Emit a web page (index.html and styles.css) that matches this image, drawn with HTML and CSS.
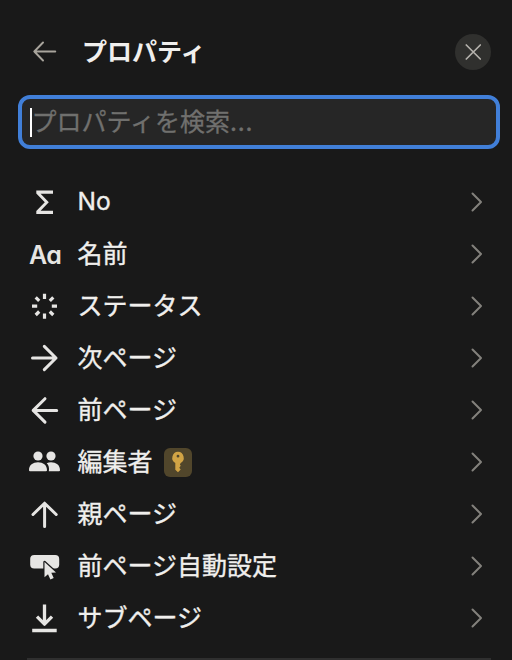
FILE: index.html
```
<!DOCTYPE html>
<html lang="ja">
<head>
<meta charset="utf-8">
<title>プロパティ</title>
<link rel="stylesheet" href="styles.css">
</head>
<body>
<main class="panel">
  <header class="header">
    <svg class="back" viewBox="0 0 24 22"><path d="M22.3 10.5H1.3M10 1.5L1.3 10.5L10 19.5"/></svg>
    <h1 class="title">プロパティ</h1>
    <button class="close" aria-label="閉じる"><svg viewBox="0 0 16 16"><path d="M1.3 1L15.3 15M15.3 1L1.3 15"/></svg></button>
  </header>
  <div class="search"><span class="caret"></span><span class="placeholder">プロパティを検索<span class="dots">...</span></span></div>
  <ul class="list">
    <li class="row"><svg class="icon" viewBox="0 0 32 32"><path class="fill" d="M8.3 4.6H25V7.7H12.6L20.8 16.2L12.6 24.7H25V27.9H8.3V24.9L16.8 16.2L8.3 7.5Z"/></svg><span class="label latin">No</span><svg class="chevron" viewBox="0 0 12 20"><path d="M1.5 1.5L10 10L1.5 18.5"/></svg></li>
    <li class="row"><span class="icon letters">Aa</span><span class="label">名前</span><svg class="chevron" viewBox="0 0 12 20"><path d="M1.5 1.5L10 10L1.5 18.5"/></svg></li>
    <li class="row"><svg class="icon" viewBox="0 0 32 32"><path class="burst" d="M16.5 3.7V8.9M16.5 23.5V28.7M4 16.2H9.2M23.8 16.2H29M7.7 7.4L11.2 10.9M21.8 21.5L25.3 25M25.3 7.4L21.8 10.9M11.2 21.5L7.7 25"/></svg><span class="label">ステータス</span><svg class="chevron" viewBox="0 0 12 20"><path d="M1.5 1.5L10 10L1.5 18.5"/></svg></li>
    <li class="row"><svg class="icon" viewBox="0 0 32 32"><path class="line" d="M4.5 16H28M16.3 4.4L28 16L16.3 27.6"/></svg><span class="label">次ページ</span><svg class="chevron" viewBox="0 0 12 20"><path d="M1.5 1.5L10 10L1.5 18.5"/></svg></li>
    <li class="row"><svg class="icon" viewBox="0 0 32 32"><path class="line" d="M28.7 16.4H5.2M17 4.7L5.2 16.4L17 28.1"/></svg><span class="label">前ページ</span><svg class="chevron" viewBox="0 0 12 20"><path d="M1.5 1.5L10 10L1.5 18.5"/></svg></li>
    <li class="row"><svg class="icon" viewBox="0 0 32 32"><circle class="fill" cx="10" cy="10" r="4.6"/><circle class="fill" cx="23" cy="10" r="4.6"/><path class="fill" d="M1 24.2C1 19 5 16.3 10 16.3S19 19 19 24.2Q19 25.3 18 25.3H2Q1 25.3 1 24.2ZM18.7 17.3Q20.6 16.3 23 16.3C28 16.3 32 19 32 24.2Q32 25.3 31 25.3H20.8C21.5 22 20.7 19.2 18.7 17.3Z"/></svg><span class="label">編集者</span><span class="badge"><svg viewBox="0 0 14 22"><path fill-rule="evenodd" d="M7 .8A6 6 0 0 0 4.3 12V18.8L7 21.3L9.7 18.6L8.3 16.7L9.7 14.8L8.9 13.5L9.7 12A6 6 0 0 0 7 .8ZM7 3.8A1.4 1.4 0 1 1 7 6.6A1.4 1.4 0 0 1 7 3.8Z"/></svg></span><svg class="chevron" viewBox="0 0 12 20"><path d="M1.5 1.5L10 10L1.5 18.5"/></svg></li>
    <li class="row"><svg class="icon" viewBox="0 0 32 32"><path class="line" d="M16.6 28.5V5.2M5 16.5L16.6 5.2L28.2 16.5"/></svg><span class="label">親ページ</span><svg class="chevron" viewBox="0 0 12 20"><path d="M1.5 1.5L10 10L1.5 18.5"/></svg></li>
    <li class="row"><svg class="icon" viewBox="0 0 32 32"><rect class="fill" x="2.2" y="5" width="29" height="13.4" rx="4"/><path class="cursor" d="M16.5 12V27.2L20 24.3L22.4 29.6L25.7 28L23.3 22.8L28 22.4Z"/></svg><span class="label">前ページ自動設定</span><svg class="chevron" viewBox="0 0 12 20"><path d="M1.5 1.5L10 10L1.5 18.5"/></svg></li>
    <li class="row"><svg class="icon" viewBox="0 0 32 32"><path class="download" d="M16.5 2.6V21.2M9 14.7L16.5 22.2L24 14.7M4.2 28.5H28.7"/></svg><span class="label">サブページ</span><svg class="chevron" viewBox="0 0 12 20"><path d="M1.5 1.5L10 10L1.5 18.5"/></svg></li>
  </ul>
  <hr class="divider">
</main>
</body>
</html>
```
FILE: styles.css
```
* { box-sizing: border-box; }
body {
  margin: 0;
  background: #191919;
  color: #f0efed;
  font-family: "Noto Sans CJK JP", sans-serif;
  font-size: 25px;
  overflow: hidden;
}
.panel { height: 660px; padding: 33px 12px 0 18px; }
.header { display: flex; align-items: center; height: 37px; padding: 0 9px 0 15px; }
.back { width: 24px; height: 22px; fill: none; stroke: #a8a49c; stroke-width: 1.9; stroke-linecap: round; stroke-linejoin: round; }
.title { margin: 0 0 0 25px; padding-bottom: 3px; font-size: 25px; line-height: 34px; font-weight: 700; flex: 1; }
.close { display: grid; place-items: center; width: 36px; height: 36px; padding: 0; border: 0; border-radius: 50%; background: #30302e; }
.close svg { width: 16px; height: 16px; fill: none; stroke: #b5b2ad; stroke-width: 1.7; stroke-linecap: round; }
.search {
  display: flex; align-items: center;
  height: 54px; margin-top: 25px; padding-left: 8px;
  border: 4px solid #417fd8; border-radius: 12px; background: #262626;
}
.caret { width: 2px; height: 29px; background: #fff; }
.placeholder { margin-left: -0.5px; padding-bottom: 3px; color: #70706e; line-height: 35px; -webkit-text-stroke: 0.3px #70706e; }
.dots { letter-spacing: 0.8px; }
.list { list-style: none; margin: 26.5px 0 0; padding: 0; }
.row { display: flex; align-items: center; height: 52.1px; padding: 0 17px 0 10px; }
.icon { flex: none; width: 32px; height: 32px; margin-right: 17.6px; color: #e6e5e3; fill: none; stroke-linecap: round; stroke-linejoin: round; }
.fill { fill: #e6e5e3; }
.line { stroke: #e6e5e3; stroke-width: 3; }
.burst { stroke: #e6e5e3; stroke-width: 3.2; stroke-linecap: butt; }
.download { stroke: #e6e5e3; stroke-width: 3.3; stroke-linecap: butt; }
.cursor { fill: #e6e5e3; stroke: #191919; stroke-width: 2.4; paint-order: stroke; }
.letters { padding-left: 1px; font: 600 25px/34px Inter, sans-serif; font-feature-settings: "cv11"; letter-spacing: -0.5px; white-space: nowrap; }
.label { padding-bottom: 3px; line-height: 35px; -webkit-text-stroke: 0.35px #f0efed; white-space: nowrap; }
.latin { padding-bottom: 0; font-family: Inter, sans-serif; font-size: 24.5px; }
.badge { display: grid; place-items: center; width: 28px; height: 29px; margin-left: 11.4px; border-radius: 6px; background: #51462b; }
.badge svg { width: 14px; height: 22px; fill: #d2a445; }
.chevron { width: 12px; height: 20px; margin-left: auto; fill: none; stroke: #83817c; stroke-width: 2; stroke-linecap: round; stroke-linejoin: round; }
.divider { height: 2px; margin: 13.5px 9px 0; border: 0; background: #2f2f2f; }
```
